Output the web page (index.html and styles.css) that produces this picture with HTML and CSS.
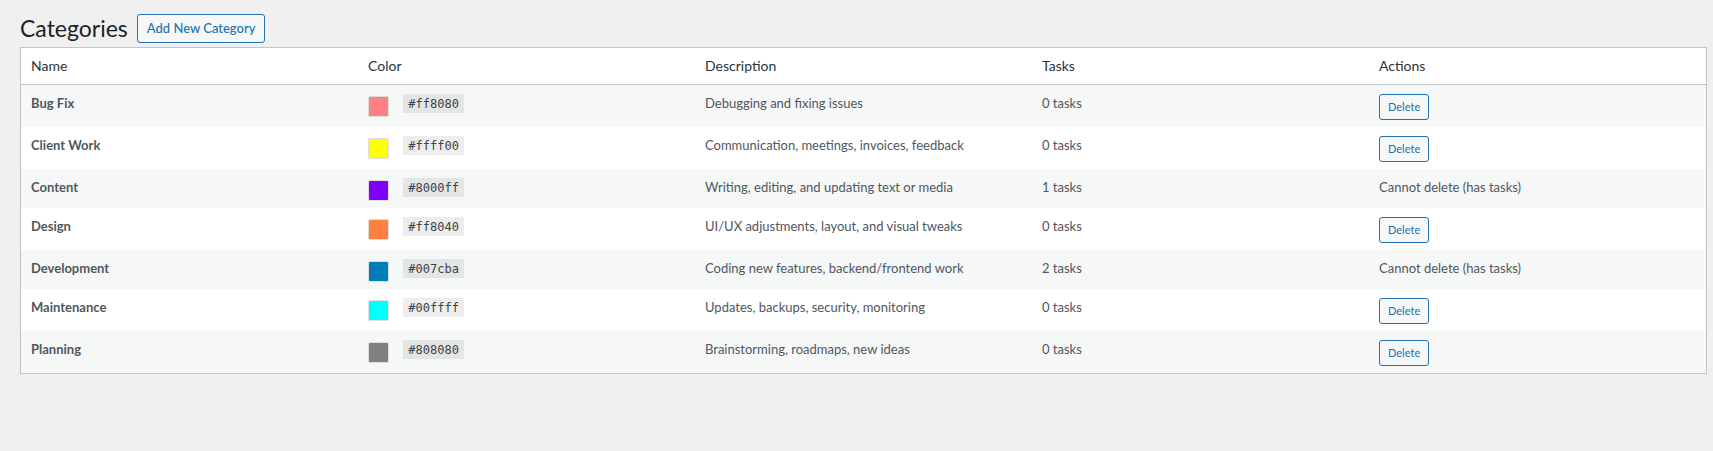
FILE: index.html
```html
<!DOCTYPE html>
<html>
<head>
    <meta charset='utf-8'>
    <title>Categories</title>
    <meta name='viewport' content='width=device-width, initial-scale=1'>
    <link rel="stylesheet" href="styles.css">
</head>
<body>
    <div class="wrap">
        <div class="page-head">
            <h1>Categories</h1>
            <a class="page-title-action" href="#">Add New Category</a>
        </div>
        <table class="cat-table">
            <thead>
                <tr>
                    <th>Name</th>
                    <th>Color</th>
                    <th>Description</th>
                    <th>Tasks</th>
                    <th>Actions</th>
                </tr>
            </thead>
            <tbody>
                <tr>
                    <td><strong>Bug Fix</strong></td>
                    <td><span class="swatch" style="background: #ff8080;"></span> <code>#ff8080</code></td>
                    <td>Debugging and fixing issues</td>
                    <td>0 tasks</td>
                    <td><button class="btn-small">Delete</button></td>
                </tr>
                <tr>
                    <td><strong>Client Work</strong></td>
                    <td><span class="swatch" style="background: #ffff00;"></span> <code>#ffff00</code></td>
                    <td>Communication, meetings, invoices, feedback</td>
                    <td>0 tasks</td>
                    <td><button class="btn-small">Delete</button></td>
                </tr>
                <tr>
                    <td><strong>Content</strong></td>
                    <td><span class="swatch" style="background: #8000ff;"></span> <code>#8000ff</code></td>
                    <td>Writing, editing, and updating text or media</td>
                    <td>1 tasks</td>
                    <td>Cannot delete (has tasks)</td>
                </tr>
                <tr>
                    <td><strong>Design</strong></td>
                    <td><span class="swatch" style="background: #ff8040;"></span> <code>#ff8040</code></td>
                    <td>UI/UX adjustments, layout, and visual tweaks</td>
                    <td>0 tasks</td>
                    <td><button class="btn-small">Delete</button></td>
                </tr>
                <tr>
                    <td><strong>Development</strong></td>
                    <td><span class="swatch" style="background: #007cba;"></span> <code>#007cba</code></td>
                    <td>Coding new features, backend/frontend work</td>
                    <td>2 tasks</td>
                    <td>Cannot delete (has tasks)</td>
                </tr>
                <tr>
                    <td><strong>Maintenance</strong></td>
                    <td><span class="swatch" style="background: #00ffff;"></span> <code>#00ffff</code></td>
                    <td>Updates, backups, security, monitoring</td>
                    <td>0 tasks</td>
                    <td><button class="btn-small">Delete</button></td>
                </tr>
                <tr>
                    <td><strong>Planning</strong></td>
                    <td><span class="swatch" style="background: #808080;"></span> <code>#808080</code></td>
                    <td>Brainstorming, roadmaps, new ideas</td>
                    <td>0 tasks</td>
                    <td><button class="btn-small">Delete</button></td>
                </tr>
            </tbody>
        </table>
    </div>
</body>
</html>
```

FILE: styles.css
```css
* {
    font-family: Lato, 'Noto Sans', sans-serif;
}
body {
    margin: 0;
    background-color: #f0f0f1;
    color: #3c434a;
    font-size: 13px;
}
.wrap {
    padding: 10px 6px 0 20px;
}
.page-head {
    display: flex;
    align-items: center;
    gap: 9px;
    height: 37px;
}
h1 {
    margin: 0;
    font-size: 23px;
    font-weight: 400;
    line-height: 1.3;
    color: #1d2327;
}
.page-title-action {
    display: inline-block;
    padding: 0 9px;
    line-height: 27px;
    border: 1px solid #2271b1;
    border-radius: 3px;
    background: #f6f7f7;
    color: #2271b1;
    font-size: 13px;
    font-weight: 500;
    text-decoration: none;
}
.cat-table {
    width: 100%;
    table-layout: fixed;
    border-spacing: 0;
    border: 1px solid #c3c4c7;
    background: #fff;
    box-shadow: 0 1px 1px rgba(0, 0, 0, .04);
}
.cat-table th {
    padding: 8px 10px;
    text-align: left;
    font-size: 14px;
    font-weight: 400;
    line-height: 1.4em;
    color: #2c3338;
    border-bottom: 1px solid #c3c4c7;
}
.cat-table td {
    padding: 9px 10px 7px;
    vertical-align: top;
    font-size: 13px;
    line-height: 1.5em;
    color: #50575e;
}
.cat-table tbody tr:nth-child(odd) {
    background: #f6f7f7;
}
.cat-table strong {
    font-weight: 700;
}
.swatch {
    display: inline-block;
    width: 19px;
    height: 19px;
    border: 1px solid #ddd;
    border-radius: 2px;
    vertical-align: -9px;
    margin-right: 10px;
}
code {
    font-family: 'DejaVu Sans Mono', monospace;
    font-size: 12px;
    padding: 3px 5px 2px;
    margin: 0 1px;
    background: rgba(0, 0, 0, .07);
    color: #3c434a;
}
.btn-small {
    min-height: 26px;
    padding: 0 8px;
    line-height: 24px;
    font-size: 11px;
    vertical-align: top;
    border: 1px solid #2271b1;
    border-radius: 3px;
    background: #f6f7f7;
    color: #2271b1;
    cursor: pointer;
}
```
